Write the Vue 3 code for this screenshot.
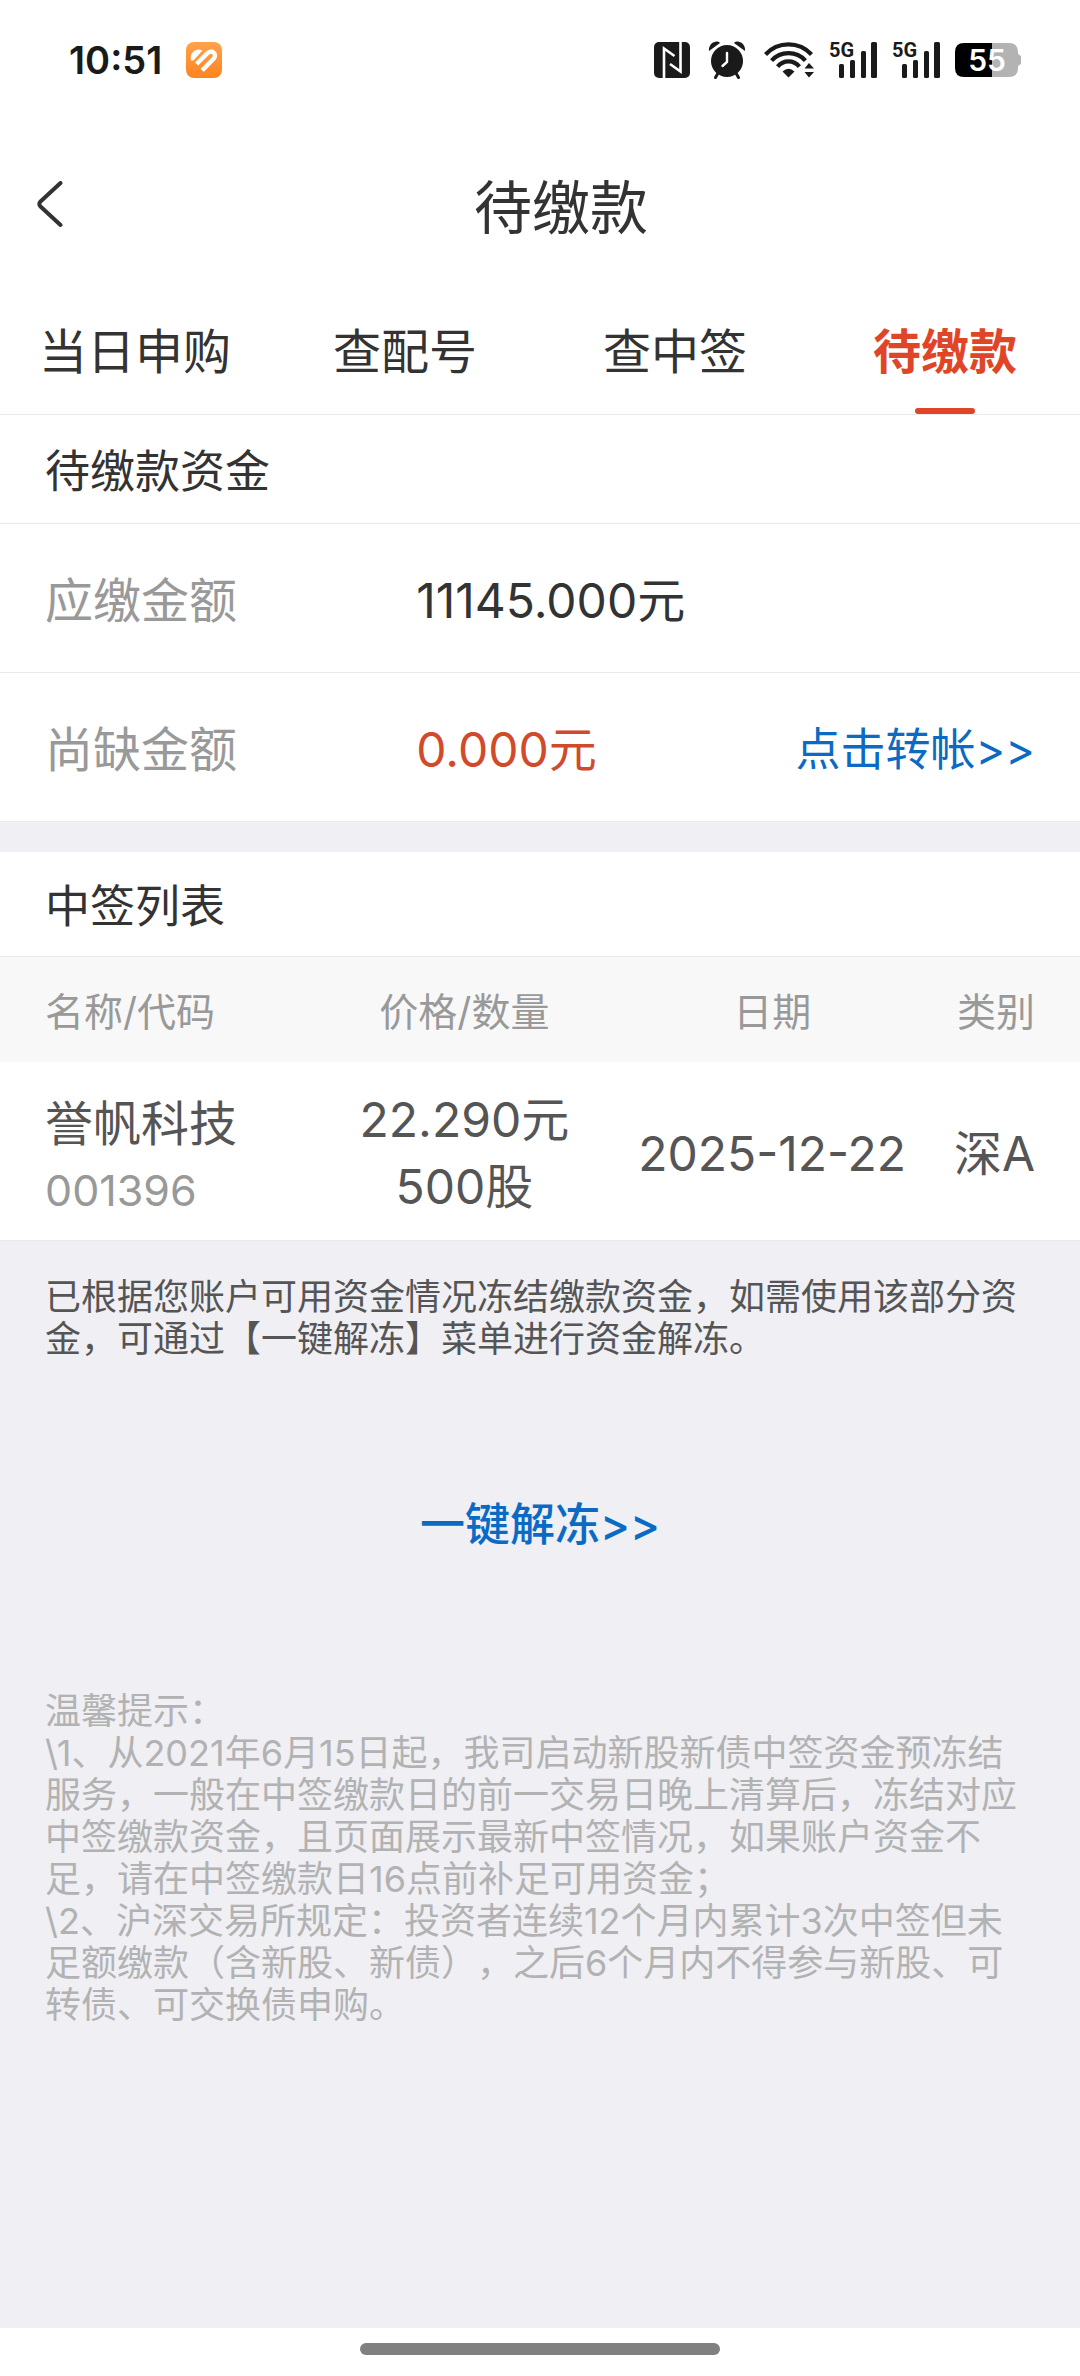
<template>
  <div class="page">
    <div class="status-bar">
      <div class="status-left">
        <span class="clock">10:51</span>
        <svg class="app-badge" width="36" height="36" viewBox="0 0 36 36" aria-hidden="true">
          <defs>
            <linearGradient id="badge" x1="0" y1="0" x2="0" y2="1">
              <stop offset="0" stop-color="#ffa24a" />
              <stop offset="1" stop-color="#ff8420" />
            </linearGradient>
          </defs>
          <rect width="36" height="36" rx="8" fill="url(#badge)" />
          <path d="M5 18.5C3 11 10 5 16.5 8.6L7.5 18.6Z" fill="#fff" />
          <g fill="none" stroke="#fff" stroke-width="4.4">
            <path d="M10.6 22L21.2 11.4C25.6 6.6 32 12.2 27.4 17L16.2 28.4" />
          </g>
        </svg>
      </div>

      <div class="status-right">
        <div class="radios">
          <svg width="36" height="36" viewBox="0 0 36 36" aria-hidden="true">
            <rect width="36" height="36" rx="5" fill="#1a1a1a" />
            <path
              d="M10 36V6.5L20.5 14M26.5 0V29.5L16 22"
              fill="none"
              stroke="#fff"
              stroke-width="2.6"
            />
          </svg>

          <svg width="38" height="38" viewBox="0 0 38 38" aria-hidden="true">
            <g fill="#1a1a1a">
              <circle cx="19" cy="20" r="16" />
              <path d="M1 10C0 3 8 -2 12 2Z" />
              <path d="M37 10C38 3 30 -2 26 2Z" />
            </g>
            <path
              d="M9.5 33L7.5 36.5M28.5 33L30.5 36.5"
              stroke="#1a1a1a"
              stroke-width="3"
              stroke-linecap="round"
            />
            <path
              d="M19 12V21L14.5 25"
              fill="none"
              stroke="#fff"
              stroke-width="2.4"
              stroke-linecap="round"
            />
          </svg>

          <svg width="50" height="36" viewBox="0 0 50 36" aria-hidden="true">
            <g fill="none" stroke="#1a1a1a" stroke-width="4.2">
              <path d="M1.5 12.5C14 -1 35 -1 47.5 12.5" />
              <path d="M7.6 18.6C16.5 8.6 32.5 8.6 41.4 18.6" />
              <path d="M13.6 24.6C19.6 17.6 29.4 17.6 35.4 24.6" />
            </g>
            <path d="M18.5 29.5Q24.5 24 30.5 29.5L24.5 35.5Z" fill="#1a1a1a" />
            <path d="M40.5 26.5L45 21L50 26.5ZM40.5 30L45 35.5L50 30Z" fill="#1a1a1a" />
          </svg>
        </div>

        <svg
          v-for="sim in 2"
          :key="sim"
          class="signal"
          width="48"
          height="50"
          viewBox="0 -6 48 50"
          aria-hidden="true"
        >
          <text class="network" x="0" y="16">5G</text>
          <g fill="#1a1a1a">
            <rect x="10" y="23" width="5" height="14" rx="1.5" />
            <rect x="21" y="19" width="5" height="18" rx="1.5" />
            <rect x="32" y="10" width="5" height="27" rx="1.5" />
            <rect x="42" y="1" width="6" height="36" rx="1.5" />
          </g>
        </svg>

        <svg class="battery" width="66" height="34" viewBox="0 0 66 34" aria-hidden="true">
          <path d="M37 0H54Q63 0 63 9V11L66 13V21L63 23V25Q63 34 54 34H37Z" fill="#b3b3b3" />
          <path d="M37 0H9Q0 0 0 9V25Q0 34 9 34H37Z" fill="#000" />
          <text class="level" x="32" y="28" text-anchor="middle">55</text>
        </svg>
      </div>
    </div>

    <header class="nav">
      <button type="button" class="back" aria-label="返回">
        <svg width="28" height="48" viewBox="0 0 28 48" aria-hidden="true">
          <path
            d="M24.5 2L4.5 20.5Q2 23 4.5 25.5L24.5 44"
            fill="none"
            stroke="#333"
            stroke-width="4"
            stroke-linecap="round"
          />
        </svg>
      </button>
      <h1>待缴款</h1>
    </header>

    <nav class="tabs">
      <button
        v-for="tab in tabs"
        :key="tab"
        type="button"
        :class="{ active: tab === activeTab }"
        @click="activeTab = tab"
      >
        {{ tab }}
      </button>
    </nav>

    <section class="funds">
      <h2>待缴款资金</h2>
      <div class="fund-row">
        <span class="label">应缴金额</span>
        <div class="value">11145.000元</div>
      </div>
      <div class="fund-row">
        <span class="label">尚缺金额</span>
        <div class="value">
          <span class="lacking">0.000元</span>
          <a href="#" class="transfer">点击转帐&gt;&gt;</a>
        </div>
      </div>
    </section>

    <section class="winning">
      <h2>中签列表</h2>
      <table>
        <thead>
          <tr>
            <th class="col-name">名称/代码</th>
            <th class="col-price">价格/数量</th>
            <th class="col-date">日期</th>
            <th class="col-type">类别</th>
          </tr>
        </thead>
        <tbody>
          <tr v-for="item in winning" :key="item.code">
            <td class="col-name">
              <div>{{ item.name }}</div>
              <div class="code">{{ item.code }}</div>
            </td>
            <td class="col-price">
              <div>{{ item.price }}元</div>
              <div>{{ item.amount }}股</div>
            </td>
            <td class="col-date">{{ item.date }}</td>
            <td class="col-type">{{ item.type }}</td>
          </tr>
        </tbody>
      </table>
    </section>

    <p class="note">
      已根据您账户可用资金情况冻结缴款资金，如需使用该部分资金，可通过【一键解冻】菜单进行资金解冻。
    </p>

    <a href="#" class="unfreeze">一键解冻&gt;&gt;</a>

    <div class="tips">
      <p>温馨提示：</p>
      <p v-for="tip in tips" :key="tip">{{ tip }}</p>
    </div>

    <footer class="home-area">
      <div class="home-bar"></div>
    </footer>
  </div>
</template>

<script setup>
import { ref } from "vue";

const tabs = ["当日申购", "查配号", "查中签", "待缴款"];
const activeTab = ref("待缴款");

const winning = ref([
  {
    name: "誉帆科技",
    code: "001396",
    price: "22.290",
    amount: 500,
    date: "2025-12-22",
    type: "深A",
  },
]);

const tips = [
  "\\1、从2021年6月15日起，我司启动新股新债中签资金预冻结服务，一般在中签缴款日的前一交易日晚上清算后，冻结对应中签缴款资金，且页面展示最新中签情况，如果账户资金不足，请在中签缴款日16点前补足可用资金；",
  "\\2、沪深交易所规定：投资者连续12个月内累计3次中签但未足额缴款（含新股、新债），之后6个月内不得参与新股、可转债、可交换债申购。",
];
</script>

<style>
body {
  background: #efeff4;
}
</style>

<style scoped>
.page {
  display: flex;
  flex-direction: column;
  min-height: 100vh;
  font-family: Inter, "Noto Sans CJK SC", sans-serif;
  color: #333;
  background: #efeff4;
  text-spacing-trim: space-all;
}

h1,
h2,
p {
  margin: 0;
  font-weight: 400;
}

button {
  padding: 0;
  border: 0;
  background: none;
  font: inherit;
  color: inherit;
}

a {
  color: #0b6ac4;
  text-decoration: none;
}

/* system status bar */
.status-bar {
  display: flex;
  align-items: center;
  justify-content: space-between;
  height: 120px;
  padding: 0 59px 0 69px;
  background: #fff;
}

.status-left {
  display: flex;
  align-items: center;
  gap: 24px;
}

.clock {
  font-size: 38px;
  font-weight: 600;
  line-height: 48px;
  color: #1a1a1a;
}

.status-right {
  display: flex;
  align-items: center;
  gap: 15px;
}

.radios {
  display: flex;
  align-items: center;
  gap: 18px;
}

.network {
  font: 700 20px "Liberation Sans Narrow", Roboto, sans-serif;
  fill: #1a1a1a;
}

.signal {
  overflow: visible;
}

.level {
  font: 600 30px Inter, sans-serif;
  fill: #fff;
}

/* title and tabs */
.nav {
  display: flex;
  align-items: center;
  height: 170px;
  padding: 0 54px 0 36px;
  background: #fff;
}

.back {
  display: flex;
  width: 60px;
}

.nav h1 {
  flex: 1;
  padding-top: 6px;
  font-size: 58px;
  line-height: 72px;
  text-align: center;
}

.tabs {
  display: grid;
  grid-template-columns: repeat(4, 1fr);
  height: 124px;
  background: #fff;
  border-bottom: 1px solid #e9e9e9;
}

.tabs button {
  position: relative;
  padding-bottom: 8px;
  font-size: 48px;
}

.tabs .active {
  font-weight: 700;
  color: #e04528;
}

.tabs .active::after {
  content: "";
  position: absolute;
  left: 50%;
  bottom: 0;
  width: 60px;
  height: 6px;
  margin-left: -30px;
  border-radius: 3px;
  background: #e04528;
}

/* amounts to pay */
.funds,
.winning {
  background: #fff;
}

.winning {
  margin-top: 30px;
}

h2 {
  padding: 6px 45px 0;
  font-size: 45px;
  line-height: 102px;
  border-bottom: 1px solid #e9e9e9;
}

.winning h2 {
  line-height: 98px;
}

.fund-row {
  display: grid;
  grid-template-columns: 3fr 5fr;
  padding: 6px 45px 0;
  font-size: 48px;
  line-height: 142px;
  border-bottom: 1px solid #e9e9e9;
}

.label {
  color: #999;
}

.value {
  display: flex;
  justify-content: space-between;
}

.lacking {
  color: #d24a2c;
}

.transfer {
  font-size: 45px;
}

/* list of winning lots */
table {
  width: 100%;
  table-layout: fixed;
  border-collapse: collapse;
}

th {
  padding: 4px 0 0;
  font-size: 39px;
  font-weight: 400;
  line-height: 101px;
  color: #999;
  background: #f8f8f8;
}

td {
  padding: 24px 0 20px;
  font-size: 48px;
  line-height: 67px;
  text-align: center;
  color: #555;
}

tbody tr {
  border-bottom: 1px solid #e9e9e9;
}

.col-name {
  width: 28%;
  padding-left: 45px;
  text-align: left;
  box-sizing: border-box;
}

td.col-name {
  padding-top: 28px;
  padding-bottom: 16px;
}

.col-price {
  width: 30%;
}

.col-date {
  width: 27%;
}

.col-type {
  width: 15%;
  padding-right: 45px;
  text-align: right;
  box-sizing: border-box;
}

.code {
  font-size: 43px;
  color: #999;
}

/* notes */
.note,
.tips {
  padding: 0 45px;
  font-size: 36px;
  line-height: 42px;
}

.note {
  margin-top: 35px;
  color: #555;
}

.unfreeze {
  align-self: center;
  margin: 132px 0;
  font-size: 45px;
  font-weight: 500;
  line-height: 66px;
}

.tips {
  color: #b2b2b2;
}

.home-area {
  display: flex;
  justify-content: center;
  margin-top: auto;
  padding: 15px 0 21px;
  background: #fff;
}

.home-bar {
  width: 33.33%;
  height: 12px;
  border-radius: 6px;
  background: #808080;
}
</style>
